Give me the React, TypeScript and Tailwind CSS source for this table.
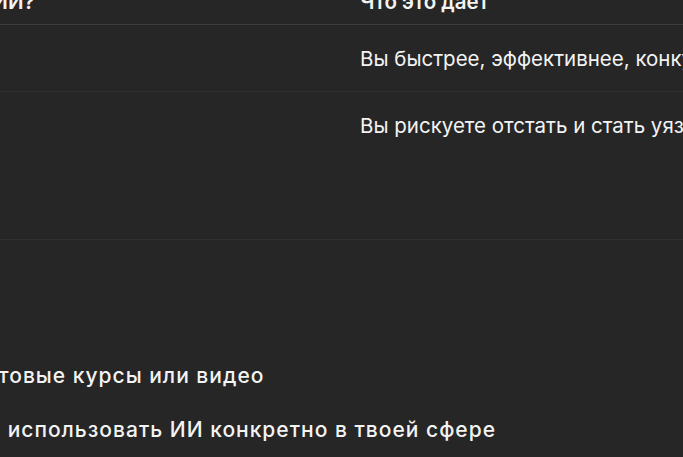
import React from "react";

export default function App() {
  return (
    <div
      className="w-[683px] h-[457px] overflow-hidden bg-[#262626] text-[#f3f3f3]"
      style={{ fontFamily: "Inter, 'Noto Sans', sans-serif" }}
    >
      <div className="mt-[-12px] w-[1100px]">
        {/* table */}
        <div className="ml-[-145px] text-[20.5px] leading-[27px]">
          <div className="grid grid-cols-[505px_1fr] border-b border-[#3d3d3d] pb-[9px] font-semibold">
            <div className="whitespace-nowrap">Используете ИИ?</div>
            <div className="whitespace-nowrap">Что это дает</div>
          </div>
          <div className="grid grid-cols-[505px_1fr] border-b border-[#303030] pt-[20px] pb-[19px]">
            <div className="whitespace-nowrap">Да</div>
            <div className="whitespace-nowrap">Вы быстрее, эффективнее, конкурентоспособнее</div>
          </div>
          <div className="grid grid-cols-[505px_1fr] border-b border-[#303030] pt-[20px] pb-[100px]">
            <div className="whitespace-nowrap">Нет</div>
            <div className="whitespace-nowrap">Вы рискуете отстать и стать уязвимым</div>
          </div>
        </div>
        {/* list */}
        <div className="mt-[122px] flex flex-col gap-[27px] text-[21px] leading-[27px] font-medium tracking-[1px]">
          <div className="ml-[-25px] whitespace-nowrap">готовые курсы или видео</div>
          <div className="ml-[-40px] whitespace-nowrap">Как использовать ИИ конкретно в твоей сфере</div>
        </div>
      </div>
    </div>
  );
}
